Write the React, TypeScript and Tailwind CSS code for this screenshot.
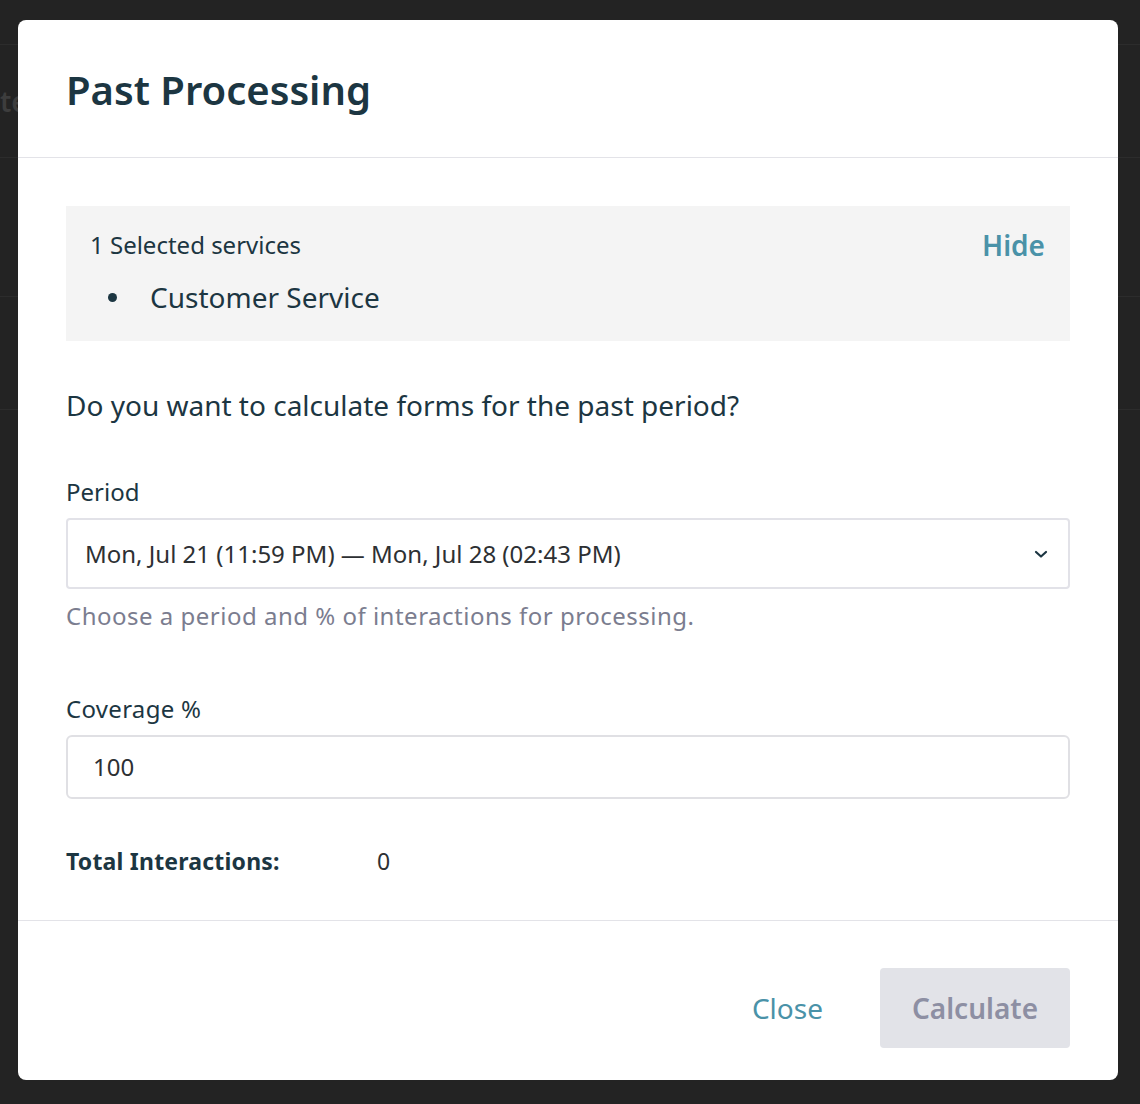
import React from "react";

export default function App() {
  return (
    <div
      className="relative w-[1140px] h-[1104px] bg-[#232323] overflow-hidden"
      style={{ fontFamily: '"Noto Sans", "Open Sans", sans-serif' }}
    >
      {/* background page */}
      <div className="flex flex-col">
        <div className="h-[45px] border-b border-[#2c2c2c]" />
        <div className="h-[113px] border-b border-[#2c2c2c] flex items-center">
          <span className="text-[28px] text-[#3d3d3d] font-semibold">te</span>
        </div>
        <div className="h-[139px] border-b border-[#2c2c2c]" />
        <div className="h-[113px] border-b border-[#2c2c2c]" />
      </div>

      {/* modal */}
      <div className="absolute left-[18px] top-[20px] w-[1100px] h-[1060px] bg-white rounded-[8px] flex flex-col">
        <div className="pt-[45px] pb-[42px] px-[48px] border-b border-[#e3e3e8]">
          <h1 className="text-[40px] leading-[50px] font-semibold text-[#1c3642]">Past Processing</h1>
        </div>

        <div className="px-[48px] pt-[48px] pb-[44px] border-b border-[#e3e3e8] text-[#1c3642]">
          <div className="bg-[#f4f4f4] h-[135px] pl-[24px] pr-[25px] pt-[25px] flex justify-between">
            <div className="flex flex-col">
              <div className="text-[24px] leading-[28px]">1 Selected services</div>
              <div className="mt-[21px] flex items-center text-[28px] leading-[34px]">
                <span className="ml-[18px] w-[9px] h-[9px] rounded-full bg-[#1c3642]" />
                <span className="ml-[33px]">Customer Service</span>
              </div>
            </div>
            <div className="text-[28px] leading-[28px] font-semibold text-[#4a92a8]">Hide</div>
          </div>

          <div className="mt-[46px] text-[28px] leading-[36px]">
            Do you want to calculate forms for the past period?
          </div>

          <div className="mt-[54px] text-[24px] leading-[30px]">Period</div>
          <div className="mt-[11px] h-[71px] border-2 border-[#e2e2e8] rounded-[4px] flex items-center justify-between pl-[17px] pr-[20px]">
            <span className="text-[24px] text-[#2d3033]">Mon, Jul 21 (11:59 PM) — Mon, Jul 28 (02:43 PM)</span>
            <svg width="14" height="10" viewBox="0 0 14 10" fill="none">
              <path d="M2 3l5 4.5L12 3" stroke="#1c3642" strokeWidth="2.2" strokeLinecap="round" strokeLinejoin="round" />
            </svg>
          </div>
          <div className="mt-[12px] text-[24px] leading-[30px] text-[#7b7d8f] tracking-[0.5px]">
            Choose a period and % of interactions for processing.
          </div>

          <div className="mt-[63px] text-[24px] leading-[30px] tracking-[0.3px]">Coverage %</div>
          <div className="mt-[11px] h-[64px] border-2 border-[#e0e0e4] rounded-[6px] flex items-center pl-[25px]">
            <span className="text-[24px] text-[#2d3033]">100</span>
          </div>

          <div className="mt-[47px] flex items-center text-[23px] leading-[30px]">
            <span className="font-bold w-[311px] tracking-[0.2px]">Total Interactions:</span>
            <span className="text-[#2d3033]">0</span>
          </div>
        </div>

        <div className="flex justify-end items-center pt-[47px] pr-[48px]">
          <button className="text-[28px] text-[#4a92a8] mr-[57px]">Close</button>
          <button className="w-[190px] h-[80px] rounded-[4px] bg-[#e2e3e8] text-[28px] font-semibold text-[#8d8fa3]">
            Calculate
          </button>
        </div>
      </div>
    </div>
  );
}
